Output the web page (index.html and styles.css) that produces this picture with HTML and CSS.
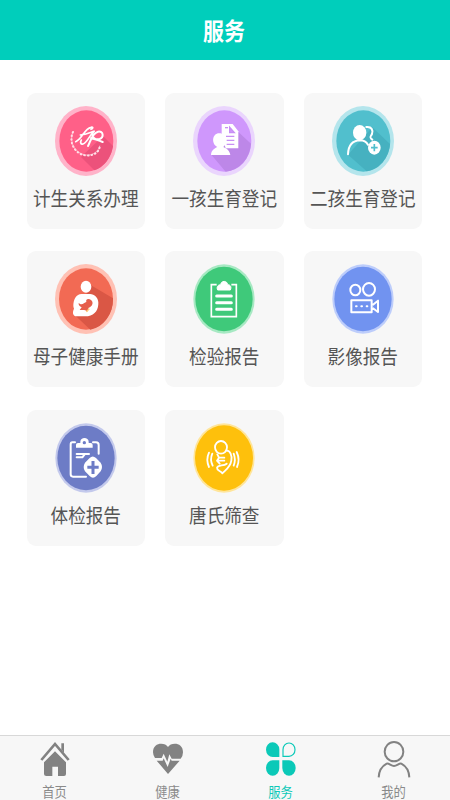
FILE: index.html
```
<!DOCTYPE html>
<html lang="zh-CN">
<head>
    <meta charset="utf-8">
    <meta name="viewport" content="width=device-width, initial-scale=1">
    <title>服务</title>
    <link rel="stylesheet" href="styles.css">
</head>
<body>
<header class="header">
    <h1>服务</h1>
</header>
<main class="services">
    <a class="card">
        <svg class="icon" viewBox="0 0 186 210">
            <ellipse cx="93" cy="105" rx="93" ry="105" fill="#ffb3c9"/>
            <ellipse cx="94" cy="105" rx="81" ry="92" fill="#ff6088"/>
            <path d="M78 153L144 90L174 120A81 92 0 0 1 118 193Z" fill="#ec527b"/>
            <g fill="none" stroke="#fff" stroke-linecap="round">
                <path d="M62 107C80 101 88 68 108 64C116 62 114 68 108 70M76 87C96 85 105 79 119 75C105 84 97 110 84 114C77 116 75 109 79 102" stroke-width="5"/>
                <path d="M99 120C107 107 110 82 129 77C146 74 147 94 134 99C122 103 110 94 113 84M108 96C126 102 132 103 143 108" stroke-width="6"/>
                <path d="M54 78C40 108 59 144 91 148C117 151 134 138 135 117" stroke="#ffe3ea" stroke-width="6" stroke-dasharray="2 9"/>
                <path d="M52 82C43 112 62 142 91 147C114 149 130 137 134 120" stroke="#ffd0dc" stroke-width="2"/>
            </g>
        </svg>
        <span>计生关系办理</span>
    </a>
    <a class="card">
        <svg class="icon" viewBox="0 0 186 210">
            <ellipse cx="93" cy="105" rx="93" ry="105" fill="#ead5fd"/>
            <ellipse cx="94" cy="105" rx="81" ry="92" fill="#cf97fc"/>
            <path d="M55 146L136 78L174 113A81 92 0 0 1 98 197Z" fill="#bd87e8"/>
            <path d="M86 54H119L136 76V127H98L86 90Z" fill="#fff"/>
            <g fill="none" stroke="#c78ff4" stroke-width="4">
                <path d="M110 64V80H124Z" fill="#cf97fc"/>
                <path d="M99 91H124M101 103H124M101 115H124"/>
                <path d="M96 65H105" />
            </g>
            <path d="M54 147C55 132 64 128 73 123C55 115 56 82 79 82C102 82 103 115 91 123C102 128 110 134 112 147Z" fill="#fff"/>
        </svg>
        <span>一孩生育登记</span>
    </a>
    <a class="card">
        <svg class="icon" viewBox="0 0 186 210">
            <ellipse cx="93" cy="105" rx="93" ry="105" fill="#b4e5ec"/>
            <ellipse cx="94" cy="105" rx="81" ry="92" fill="#51bfcd"/>
            <path d="M48 146L121 64L174 114A81 92 0 0 1 104 196Z" fill="#46b1c0"/>
            <g fill="none" stroke="#fff" stroke-width="6" stroke-linecap="round">
                <path d="M103 63C119 61 124 73 120 84C117 91 110 93 121 101"/>
                <path d="M48 145C49 120 60 104 84 103C96 103 104 109 108 116"/>
            </g>
            <ellipse cx="83" cy="80" rx="20" ry="23" fill="#fff"/>
            <ellipse cx="127" cy="125" rx="19" ry="21" fill="#fff"/>
            <path d="M127 114V136M117 125H137" stroke="#51bfcd" stroke-width="5"/>
        </svg>
        <span>二孩生育登记</span>
    </a>
    <a class="card">
        <svg class="icon" viewBox="0 0 186 210">
            <ellipse cx="93" cy="105" rx="93" ry="105" fill="#ffc1b4"/>
            <ellipse cx="93" cy="105" rx="81" ry="92" fill="#f26a54"/>
            <path d="M60 154L108 64L174 103A81 92 0 0 1 106 197Z" fill="#da5745"/>
            <ellipse cx="93" cy="68" rx="16" ry="18" fill="#fff"/>
            <path d="M57 134C52 122 58 102 65 96C70 91 77 90 86 90H105C119 90 129 101 130 115C131 136 121 153 99 157H65C54 157 51 146 57 134Z" fill="#fff"/>
            <path d="M71 117C81 126 87 116 94 114C91 103 103 104 108 108C117 115 112 128 101 131L97 143C90 136 83 139 74 138L80 130C74 127 70 123 71 117Z" fill="#e65e4b"/>
            <path d="M94 143L103 134" stroke="#ffd177" stroke-width="4"/>
        </svg>
        <span>母子健康手册</span>
    </a>
    <a class="card">
        <svg class="icon" viewBox="0 0 186 210">
            <ellipse cx="93" cy="105" rx="92" ry="104" fill="#a7e9c3"/>
            <ellipse cx="93" cy="105" rx="86" ry="97" fill="#3fc97a"/>
            <path d="M71 62H55V158H130V62H115" fill="none" stroke="#fff" stroke-width="5"/>
            <path d="M74 78C70 70 74 62 83 62C84 49 103 49 104 62C113 62 116 70 112 78Z" fill="#fff" stroke="#fff" stroke-width="3" stroke-linejoin="round"/>
            <path d="M71 96H115M71 116H115M71 136H115" stroke="#fff" stroke-width="9" stroke-linecap="round"/>
        </svg>
        <span>检验报告</span>
    </a>
    <a class="card">
        <svg class="icon" viewBox="0 0 186 210">
            <ellipse cx="93" cy="105" rx="92" ry="104" fill="#bdcdfb"/>
            <ellipse cx="93" cy="105" rx="86" ry="97" fill="#7193f0"/>
            <g fill="none" stroke="#fff" stroke-width="6" stroke-linejoin="round">
                <ellipse cx="70" cy="78" rx="15" ry="16"/>
                <ellipse cx="111" cy="76" rx="18" ry="19"/>
                <path d="M58 109H119V145H58ZM122 123L138 110V144L122 132"/>
                <path d="M72 127H106" stroke-dasharray="2 14" stroke-linecap="round"/>
            </g>
        </svg>
        <span>影像报告</span>
    </a>
    <a class="card">
        <svg class="icon" viewBox="0 0 186 210">
            <ellipse cx="93" cy="105" rx="92" ry="104" fill="#c3c9ec"/>
            <ellipse cx="93" cy="105" rx="86" ry="97" fill="#6d7cc6"/>
            <g fill="none" stroke="#fff" stroke-linecap="round" stroke-linejoin="round">
                <path d="M60 58H52Q47 58 47 65V154Q47 161 54 161H93M114 58H123Q131 58 131 66V92" stroke-width="6"/>
                <path d="M65 93H102M65 103H82L89 94" stroke-width="6"/>
            </g>
            <path d="M63 74V65Q63 60 69 60H76V56C76 41 101 41 101 56V60H107Q113 60 113 66V74Z" fill="#fff"/>
            <circle cx="88" cy="59" r="5" fill="#6d7cc6"/>
            <path d="M104 105Q113 96 123 105L137 119Q145 132 137 145L124 159Q114 169 104 159L90 145Q82 133 90 119Z" fill="#fff"/>
            <path d="M114 114V153M97 133H131" stroke="#6d7cc6" stroke-width="9"/>
        </svg>
        <span>体检报告</span>
    </a>
    <a class="card">
        <svg class="icon" viewBox="0 0 186 210">
            <ellipse cx="93" cy="105" rx="92" ry="104" fill="#ffe59a"/>
            <ellipse cx="93" cy="105" rx="87" ry="98" fill="#fec00c"/>
            <g fill="none" stroke="#fff" stroke-width="5.5" stroke-linecap="round" stroke-linejoin="round">
                <ellipse cx="84" cy="73" rx="18" ry="19"/>
                <path d="M101 83C111 83 118 96 115 113C112 133 99 140 88 151C83 143 71 143 72 134C75 124 91 130 101 122"/>
                <path d="M73 94L78 104L72 113H94M77 104H94M72 113L80 122"/>
                <path d="M58 92Q50 110 59 128M48 89Q38 110 48 132M122 92Q129 110 122 128M131 87Q142 110 132 132"/>
            </g>
        </svg>
        <span>唐氏筛查</span>
    </a>
</main>
<nav class="tabbar">
    <a class="tab">
        <svg viewBox="0 0 102 114">
            <path d="M70 25V7H78V36Z"/>
            <path d="M18 64L51 31L84 64V99Q84 105 78 105H60V77H43V105H25Q18 105 18 99Z"/>
            <path d="M10 57L51 9L92 57" fill="none" stroke="#828282" stroke-width="8"/>
        </svg>
        <span>首页</span>
    </a>
    <a class="tab">
        <svg viewBox="0 0 102 114">
            <path d="M51 18C59 4 96 2 96 34Q96 45 89 53H62L55 40L49 62L38 38L32 51H12Q6 43 6 34C6 2 43 4 51 18Z"/>
            <path d="M17 59H35L38 52L50 78L59 53L62 59H86L51 99Z"/>
        </svg>
        <span>健康</span>
    </a>
    <a class="tab active">
        <svg viewBox="0 0 102 114">
            <path d="M46 48V25A20 22 0 1 0 26 48Z"/>
            <path d="M46 58V81A20 23 0 1 1 26 58Z"/>
            <path d="M55 58V81A20 23 0 1 0 75 58Z"/>
            <path d="M57 46V26A18 20 0 1 1 75 46Z" fill="none" stroke="#0bc9b8" stroke-width="3.5"/>
        </svg>
        <span>服务</span>
    </a>
    <a class="tab">
        <svg viewBox="0 0 102 114">
            <g fill="none" stroke="#828282" stroke-width="6">
                <ellipse cx="51" cy="32" rx="28" ry="29"/>
                <path d="M5 109C6 90 14 76 29 68C36 66 42 75 51 75C60 75 66 66 73 68C88 76 96 90 97 109"/>
            </g>
        </svg>
        <span>我的</span>
    </a>
</nav>
</body>
</html>
```
FILE: styles.css
```
* {
    box-sizing: border-box;
}
body {
    font-family: "Noto Sans CJK SC", sans-serif;
    background: #fff;
    margin: 0;
    height: 100vh;
    display: flex;
    flex-direction: column;
    overflow: hidden;
}
.header {
    height: 60px;
    flex: none;
    display: flex;
    align-items: center;
    justify-content: center;
    background: #00cebb;
    color: #fff;
}
.header h1 {
    margin: 0 2px 0 0;
    font-size: 21px;
    line-height: 30px;
    font-weight: 700;
    transform: scaleY(1.12);
}
.services {
    flex: 1;
    display: grid;
    grid-template-columns: repeat(3, 118.5px);
    grid-auto-rows: 136px;
    align-content: start;
    gap: 22.4px 20px;
    padding: 33px 26.5px 0;
}
.card {
    display: flex;
    flex-direction: column;
    align-items: center;
    padding-top: 13px;
    background: #f7f7f7;
    border-radius: 9px;
    color: #555;
}
.icon {
    width: 62px;
    height: 70px;
}
.card span {
    margin-top: 9px;
    font-size: 17.6px;
    line-height: 26px;
    white-space: nowrap;
    transform: scaleY(1.13);
}
.tabbar {
    height: 65px;
    flex: none;
    display: grid;
    grid-template-columns: repeat(4, 113px);
    margin-left: -2px;
    background: #f7f7f7;
    border-top: 1px solid #d8d8d8;
}
.tab {
    display: flex;
    flex-direction: column;
    align-items: center;
    padding-top: 5px;
    color: #8a8a8a;
}
.tab svg {
    width: 34px;
    height: 38px;
    fill: #828282;
}
.tab span {
    margin-top: 7px;
    font-size: 12.3px;
    line-height: 12px;
    transform: scaleY(1.08);
}
.active {
    color: #0bc9b8;
}
.active svg {
    fill: #0bc9b8;
}
```
